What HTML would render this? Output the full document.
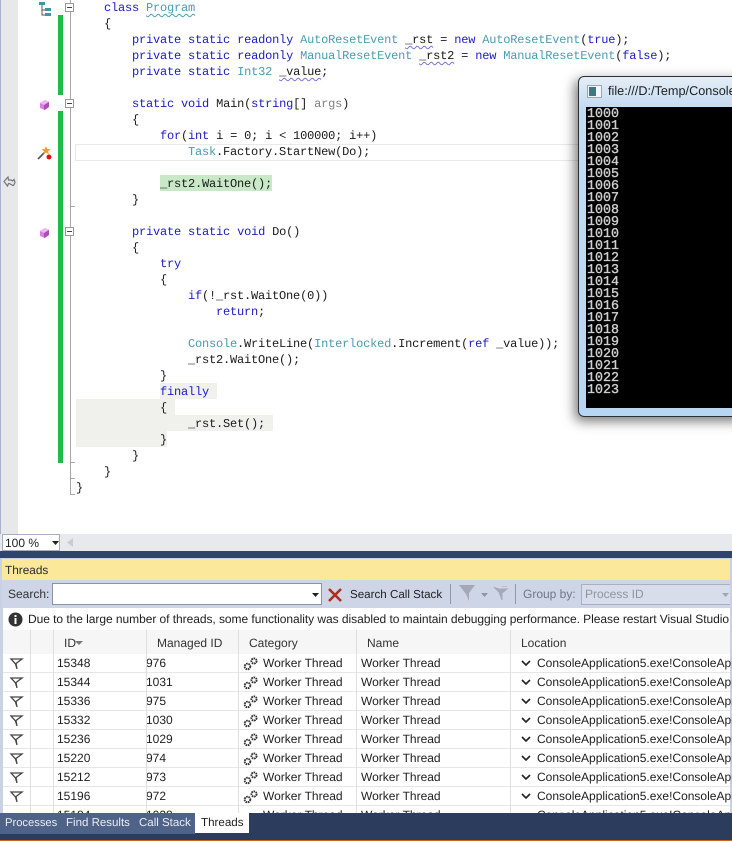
<!DOCTYPE html>
<html><head><meta charset="utf-8"><style>
html,body{margin:0;padding:0;background:#fff}
#r{position:relative;width:732px;height:841px;overflow:hidden;background:#fff;font-family:"Liberation Sans",sans-serif;font-size:12px;color:#1e1e1e;text-rendering:geometricPrecision}
#r div,#r svg{position:absolute}
pre{position:absolute;left:76px;top:0;margin:0;font:12px/16px "Liberation Mono",monospace;letter-spacing:-.2px;color:#1a1a1a}
b{font-weight:normal}
.k{color:#1c1cc4}.t{color:#4a9cb5}.g{color:#808080}
.s{text-decoration:underline wavy #7a70d8 1px;text-underline-offset:2px}
.st{text-decoration:underline wavy #4a9cb5 1px;text-underline-offset:2px}
.row{left:3px;width:727px;height:19px;border-bottom:1px solid #e6e6e6;box-sizing:border-box;background:#fff}
.row span{position:absolute;top:2px;white-space:nowrap}
.i{left:54px}.m{left:143px}.c{left:260px}.n{left:358px}.l{left:534px}
.h{position:absolute;top:636px;white-space:nowrap;color:#333}
.v{top:630px;width:1px;height:183px;background:#dfdfdf}
.con{left:587px;top:109px;font:13.33px/12px "Liberation Mono",monospace;color:#cfcfcf;white-space:pre;-webkit-text-stroke:.35px #cfcfcf}
</style></head><body><div id="r">
<div style="left:0;top:0;width:1px;height:534px;background:#a9b2d0"></div>
<div style="left:1px;top:0;width:17px;height:534px;background:#e7e8ea"></div>

<div style="left:160px;top:175px;width:112px;height:16px;background:#c9e8c8"></div>
<div style="left:75px;top:144px;width:510px;height:15px;border:1px solid #e9e9e9"></div>
<div style="left:160px;top:383px;width:57px;height:16px;background:#f0f1ec"></div>
<div style="left:76px;top:399px;width:99px;height:16px;background:#f0f1ec"></div>
<div style="left:76px;top:415px;width:197px;height:16px;background:#f0f1ec"></div>
<div style="left:76px;top:431px;width:91px;height:16px;background:#f0f1ec"></div>
<div style="left:58px;top:15px;width:5px;height:80px;background:#1ebc4a"></div>
<div style="left:58px;top:111px;width:5px;height:352px;background:#1ebc4a"></div>
<div style="left:70px;top:0;width:1px;height:495px;background:#a8a8a8"></div>
<div style="left:71px;top:206px;width:4px;height:1px;background:#a8a8a8"></div>
<div style="left:71px;top:462px;width:4px;height:1px;background:#a8a8a8"></div>
<div style="left:71px;top:478px;width:4px;height:1px;background:#a8a8a8"></div>
<div style="left:71px;top:494px;width:4px;height:1px;background:#a8a8a8"></div>

<svg style="left:65px;top:3px" width="10" height="9"><rect x=".5" y=".5" width="8" height="8" fill="#fff" stroke="#999"/><path d="M2 4.500h5" stroke="#444"/></svg>
<svg style="left:65px;top:99px" width="10" height="9"><rect x=".5" y=".5" width="8" height="8" fill="#fff" stroke="#999"/><path d="M2 4.500h5" stroke="#444"/></svg>
<svg style="left:65px;top:227px" width="10" height="9"><rect x=".5" y=".5" width="8" height="8" fill="#fff" stroke="#999"/><path d="M2 4.500h5" stroke="#444"/></svg>

<svg style="left:38px;top:1px" width="14" height="16"><path d="M4 3v11h3M4 9h3" fill="none" stroke="#555"/><rect x="1" y="1" width="6" height="3" fill="#3d95a8"/><rect x="7" y="7" width="6" height="3" fill="#3d95a8"/><rect x="7" y="12" width="6" height="3" fill="#3d95a8"/></svg>
<svg style="left:39px;top:99px" width="11" height="12"><path d="M1 4l5-3 4 2v5l-4 3-5-2z" fill="#d67fe0"/><path d="M1 4l4 2 5-3-4-2z" fill="#eeb8f2"/><path d="M5 6v5l5-3V3z" fill="#a84fb8"/></svg>
<svg style="left:39px;top:227px" width="11" height="12"><path d="M1 4l5-3 4 2v5l-4 3-5-2z" fill="#d67fe0"/><path d="M1 4l4 2 5-3-4-2z" fill="#eeb8f2"/><path d="M5 6v5l5-3V3z" fill="#a84fb8"/></svg>
<svg style="left:36px;top:145px" width="18" height="16"><path d="M2 14l7-7" stroke="#555" stroke-width="1.600"/><path d="M10 1l1.300 3 3.200.2-2.400 2 .8 3-2.900-1.700-2.700 1.700.7-3-2.400-2 3.200-.2z" fill="#f59a2e"/><circle cx="13" cy="12" r="2.500" fill="#e01010"/></svg>
<svg style="left:3px;top:175px" width="13" height="14"><path d="M5 2L1 6.500 4.500 11l1-2.500c2 0 3.500 2 5 2l1.500-3-1-3-1.500 1.500L8 5H5.500z" fill="none" stroke="#777" stroke-width="1.200"/></svg>

<pre>    <b class="k">class</b> <b class="t st">Program</b>
    {
        <b class="k">private</b> <b class="k">static</b> <b class="k">readonly</b> <b class="t">AutoResetEvent</b> <b class="s">_rst</b> = <b class="k">new</b> <b class="t">AutoResetEvent</b>(<b class="k">true</b>);
        <b class="k">private</b> <b class="k">static</b> <b class="k">readonly</b> <b class="t">ManualResetEvent</b> <b class="s">_rst2</b> = <b class="k">new</b> <b class="t">ManualResetEvent</b>(<b class="k">false</b>);
        <b class="k">private</b> <b class="k">static</b> <b class="t">Int32</b> <b class="s">_value</b>;

        <b class="k">static</b> <b class="k">void</b> Main(<b class="k">string</b>[] <b class="g">args</b>)
        {
            <b class="k">for</b>(<b class="k">int</b> i = 0; i &lt; 100000; i++)
                <b class="t">Task</b>.Factory.StartNew(Do);

            _rst2.WaitOne();
        }

        <b class="k">private</b> <b class="k">static</b> <b class="k">void</b> Do()
        {
            <b class="k">try</b>
            {
                <b class="k">if</b>(!_rst.WaitOne(0))
                    <b class="k">return</b>;

                <b class="t">Console</b>.WriteLine(<b class="t">Interlocked</b>.Increment(<b class="k">ref</b> _value));
                _rst2.WaitOne();
            }
            <b class="k">finally</b>
            {
                _rst.Set();
            }
        }
    }
}</pre>

<div style="left:0;top:534px;width:732px;height:17px;background:#e8e9ee"></div>
<div style="left:2px;top:534px;width:58px;height:17px;box-sizing:border-box;border:1px solid #a6adc0;background:#fff;font-size:12px;line-height:16px;padding-left:2px">100 %</div>
<svg style="left:52px;top:541px" width="7" height="4"><path d="M0 0h7L3.500 4z" fill="#222"/></svg>
<svg style="left:67px;top:538px" width="6" height="9"><path d="M6 0v9L0 4.500z" fill="#c9ccd4"/></svg>

<div style="left:0;top:551px;width:732px;height:7px;background:#2f456b"></div>
<div style="left:0;top:558px;width:732px;height:255px;background:#c9d2e4"></div>
<div style="left:2px;top:559px;width:728px;height:21px;background:#fbe89a;line-height:22px;padding-left:3px;box-sizing:border-box;color:#2a2a2a;font-size:11.8px">Threads</div>

<div style="left:2px;top:580px;width:728px;height:28px;background:#cdd5e7"></div>
<div style="left:8px;top:587px;font-size:12px;color:#333">Search:</div>
<div style="left:52px;top:583px;width:270px;height:22px;box-sizing:border-box;background:#fff;border:1px solid #8c93a8"></div>
<svg style="left:312px;top:593px" width="7" height="4"><path d="M0 0h7L3.500 4z" fill="#222"/></svg>
<svg style="left:328px;top:588px" width="15" height="14"><path d="M1 1l12 12M13 1L1 13" stroke="#a8301c" stroke-width="2.600"/></svg>
<div style="left:350px;top:588px;font-size:11.6px;color:#222;white-space:nowrap">Search Call Stack</div>
<div style="left:450px;top:584px;width:1px;height:20px;background:#8f97aa"></div>
<svg style="left:459px;top:585px" width="16" height="17"><path d="M0 0h16L10 8v8L7 9z" fill="#a3a9b5"/></svg>
<svg style="left:481px;top:593px" width="7" height="4"><path d="M0 0h7L3.500 4z" fill="#8e94a0"/></svg>
<svg style="left:493px;top:586px" width="15" height="15"><path d="M1 1l5 5 3 8V7l5-4H8M9 0l5 0" fill="#a3a9b5" stroke="#a3a9b5"/></svg>
<div style="left:515px;top:584px;width:1px;height:20px;background:#8f97aa"></div>
<div style="left:523px;top:587px;font-size:12px;color:#6f7785;white-space:nowrap">Group by:</div>
<div style="left:581px;top:584px;width:149px;height:21px;box-sizing:border-box;background:#d7ddeb;border:1px solid #a8afbf;border-right:none;color:#8d95a3;font-size:12px;line-height:19px;padding-left:3px">Process ID</div>
<svg style="left:722px;top:593px" width="7" height="4"><path d="M0 0h7L3.500 4z" fill="#a0a6b3"/></svg>

<div style="left:3px;top:608px;width:727px;height:22px;background:#fff"></div>
<svg style="left:8px;top:612px" width="15" height="15"><circle cx="7.500" cy="7.500" r="7" fill="#333"/><rect x="6.500" y="6" width="2" height="6" fill="#fff"/><rect x="6.500" y="3" width="2" height="2" fill="#fff"/></svg>
<div style="left:28px;top:612px;white-space:nowrap;font-size:12px;width:702px;overflow:hidden;color:#1e1e1e;letter-spacing:-.05px">Due to the large number of threads, some functionality was disabled to maintain debugging performance. Please restart Visual Studio</div>

<div style="left:3px;top:630px;width:727px;height:24px;background:#f6f6f6;border-bottom:1px solid #cfd0d4"></div>
<span class="h" style="left:64px">ID</span>
<svg style="left:75px;top:641px" width="8" height="4"><path d="M0 0h8L4 4z" fill="#777"/></svg>
<span class="h" style="left:157px">Managed ID</span>
<span class="h" style="left:249px">Category</span>
<span class="h" style="left:367px">Name</span>
<span class="h" style="left:521px">Location</span>

<div class="row" style="top:654px"><span class="i">15348</span><span class="m">976</span><span class="c">Worker Thread</span><span class="n">Worker Thread</span><span class="l">ConsoleApplication5.exe!ConsoleApp</span></div>
<div class="row" style="top:673px"><span class="i">15344</span><span class="m">1031</span><span class="c">Worker Thread</span><span class="n">Worker Thread</span><span class="l">ConsoleApplication5.exe!ConsoleApp</span></div>
<div class="row" style="top:692px"><span class="i">15336</span><span class="m">975</span><span class="c">Worker Thread</span><span class="n">Worker Thread</span><span class="l">ConsoleApplication5.exe!ConsoleApp</span></div>
<div class="row" style="top:711px"><span class="i">15332</span><span class="m">1030</span><span class="c">Worker Thread</span><span class="n">Worker Thread</span><span class="l">ConsoleApplication5.exe!ConsoleApp</span></div>
<div class="row" style="top:730px"><span class="i">15236</span><span class="m">1029</span><span class="c">Worker Thread</span><span class="n">Worker Thread</span><span class="l">ConsoleApplication5.exe!ConsoleApp</span></div>
<div class="row" style="top:749px"><span class="i">15220</span><span class="m">974</span><span class="c">Worker Thread</span><span class="n">Worker Thread</span><span class="l">ConsoleApplication5.exe!ConsoleApp</span></div>
<div class="row" style="top:768px"><span class="i">15212</span><span class="m">973</span><span class="c">Worker Thread</span><span class="n">Worker Thread</span><span class="l">ConsoleApplication5.exe!ConsoleApp</span></div>
<div class="row" style="top:787px"><span class="i">15196</span><span class="m">972</span><span class="c">Worker Thread</span><span class="n">Worker Thread</span><span class="l">ConsoleApplication5.exe!ConsoleApp</span></div>
<div class="row" style="top:806px"><span class="i">15184</span><span class="m">1028</span><span class="c">Worker Thread</span><span class="n">Worker Thread</span><span class="l">ConsoleApplication5.exe!ConsoleApp</span></div>

<div class="v" style="left:30px"></div><div class="v" style="left:53px"></div><div class="v" style="left:146px"></div><div class="v" style="left:238px"></div><div class="v" style="left:356px"></div><div class="v" style="left:510px"></div>

<svg style="left:9px;top:656px" width="250" height="160" fill="none">
<g stroke="#444" stroke-width="1.300"><path d="M2 3h11L7 7.500 8 13 6.500 8z"/><path d="M2 22h11L7 26.500 8 32 6.500 27z"/><path d="M2 41h11L7 45.500 8 51 6.500 46z"/><path d="M2 60h11L7 64.500 8 70 6.500 65z"/><path d="M2 79h11L7 83.500 8 89 6.500 84z"/><path d="M2 98h11L7 102.500 8 108 6.500 103z"/><path d="M2 117h11L7 121.500 8 127 6.500 122z"/><path d="M2 136h11L7 140.500 8 146 6.500 141z"/></g>
<g stroke="#333" stroke-width="1.900" stroke-dasharray="1.600 .7"><circle cx="238.500" cy="10.500" r="2.800"/><circle cx="245" cy="5" r="2.600"/><circle cx="238.500" cy="29.500" r="2.800"/><circle cx="245" cy="24" r="2.600"/><circle cx="238.500" cy="48.500" r="2.800"/><circle cx="245" cy="43" r="2.600"/><circle cx="238.500" cy="67.500" r="2.800"/><circle cx="245" cy="62" r="2.600"/><circle cx="238.500" cy="86.500" r="2.800"/><circle cx="245" cy="81" r="2.600"/><circle cx="238.500" cy="105.500" r="2.800"/><circle cx="245" cy="100" r="2.600"/><circle cx="238.500" cy="124.500" r="2.800"/><circle cx="245" cy="119" r="2.600"/><circle cx="238.500" cy="143.500" r="2.800"/><circle cx="245" cy="138" r="2.600"/></g>
</svg>
<svg style="left:521px;top:656px" width="10" height="160" fill="none" stroke="#222" stroke-width="1.600"><path d="M1 5l4 4 4-4M1 24l4 4 4-4M1 43l4 4 4-4M1 62l4 4 4-4M1 81l4 4 4-4M1 100l4 4 4-4M1 119l4 4 4-4M1 138l4 4 4-4"/></svg>

<div style="left:0;top:813px;width:732px;height:27px;background:#2b3c5c"></div>
<div style="left:0;top:840px;width:732px;height:1px;background:#c8641e"></div>
<div style="left:0;top:813px;width:195px;height:21px;background:#4f6287"></div>
<div style="left:195px;top:813px;width:54px;height:20px;background:#fff"></div>
<div style="left:5px;top:817px;color:#e8ecf4;white-space:nowrap;font-size:11.2px">Processes</div>
<div style="left:66px;top:817px;color:#e8ecf4;white-space:nowrap;font-size:11.5px">Find Results</div>
<div style="left:139px;top:817px;color:#e8ecf4;white-space:nowrap;font-size:11.5px">Call Stack</div>
<div style="left:201px;top:816px;color:#1e1e1e;white-space:nowrap;font-size:11.6px">Threads</div>

<div style="left:578px;top:76px;width:170px;height:341px;box-sizing:border-box;border:1px solid #2a3036;border-radius:6px;background:linear-gradient(#e6eef6,#c4dcf2 30px,#b6d6f4);box-shadow:-3px 4px 12px rgba(0,0,0,.55)"></div>
<svg style="left:587px;top:85px" width="15" height="13"><rect x=".5" y=".5" width="14" height="12" fill="#f4f6f8" stroke="#9aa6b2"/><rect x="2" y="2" width="7" height="9" fill="#3c7a80"/></svg>
<div style="left:608px;top:84px;font-size:12.7px;color:#1e1e1e;white-space:nowrap;width:124px;overflow:hidden">file:///D:/Temp/ConsoleApplication5</div>
<div style="left:586px;top:107px;width:146px;height:301px;background:#000"></div>
<div class="con">1000
1001
1002
1003
1004
1005
1006
1007
1008
1009
1010
1011
1012
1013
1014
1015
1016
1017
1018
1019
1020
1021
1022
1023</div>
</div></body></html>
